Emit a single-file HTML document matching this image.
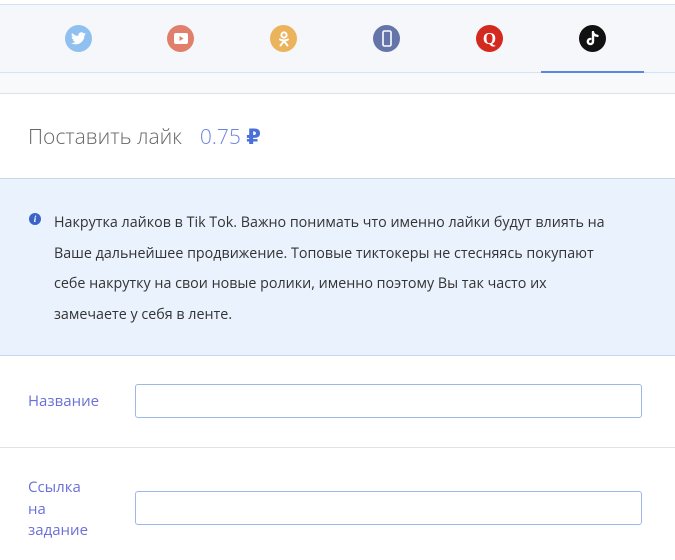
<!DOCTYPE html>
<html><head><meta charset="utf-8"><style>
*{margin:0;padding:0;box-sizing:border-box}
body{width:675px;height:560px;overflow:hidden;background:#fff;font-family:"Open Sans","Liberation Sans","DejaVu Sans",sans-serif;position:relative}
.nav{position:absolute;top:4px;left:0;width:675px;height:69px;background:#f5f7fa;border-top:1px solid #d3e2f4;border-bottom:1px solid #d3e2f4}
.strip{position:absolute;top:73px;left:0;width:675px;height:21px;background:#f8f9fb;border-bottom:1px solid #dcdfe4}
.ic{position:absolute;top:25px;width:27px;height:27px;border-radius:50%;display:flex;align-items:center;justify-content:center}
.ul{position:absolute;left:541px;top:71px;width:103px;height:2px;background:#5b87e0}
.title{position:absolute;left:28px;top:123px;font-size:21px;color:#666;font-weight:300;letter-spacing:0px}
.title span{color:#6c83de;margin-left:18px}
.info{position:absolute;top:178px;left:0;width:675px;height:178px;background:#eaf2fd;border-top:1px solid #c8d8ec;border-bottom:1px solid #c8d8ec}
.info p{position:absolute;left:54px;top:29px;white-space:nowrap;font-size:14.3px;line-height:30.5px;color:#333}
.ii{position:absolute;left:29px;top:34px;width:12px;height:12px;border-radius:50%;background:#3b62c9;color:#fff;font-size:9px;font-weight:bold;font-style:italic;text-align:center;line-height:12px;font-family:"Liberation Serif",serif}
.hr{position:absolute;left:0;top:447px;width:675px;height:1px;background:#e2e2e2}
.lbl{position:absolute;left:28px;font-size:15px;color:#6a70d8;line-height:21.5px}
.inp{position:absolute;left:135px;width:507px;height:34px;border:1px solid #9fb6e8;border-radius:3px;background:#fff}
</style></head><body>
<div class="nav"></div>
<div class="strip"></div>
<div class="ic" style="left:65px;background:#8fc0f0"><svg width="15" height="13" viewBox="0 0 24 20"><path fill="#fff" d="M24 2.4a10 10 0 0 1-2.8.8A5 5 0 0 0 23.3.5a10 10 0 0 1-3.1 1.2A4.9 4.9 0 0 0 11.8 6 14 14 0 0 1 1.7.9a4.9 4.9 0 0 0 1.5 6.6A4.900 4.900 0 0 1 1 6.9a4.9 4.9 0 0 0 3.9 4.8 4.900 4.900 0 0 1-2.2.1 4.9 4.9 0 0 0 4.6 3.4A9.900 9.900 0 0 1 0 17.2 14 14 0 0 0 7.5 19.4c9 0 14-7.500 14-14v-.6A10 10 0 0 0 24 2.4z"/></svg></div>
<div class="ic" style="left:167px;background:#e07f6c"><svg width="14" height="11" viewBox="0 0 14 11"><rect width="14" height="11" rx="2" fill="#fff"/><path d="M5.500 3v5l4-2.500z" fill="#e07f6c"/></svg></div>
<div class="ic" style="left:270px;background:#ebb35c"><svg width="12" height="16" viewBox="0 0 12 16" fill="none" stroke="#fff" stroke-width="2" stroke-linecap="round"><circle cx="6" cy="4" r="2.6"/><path d="M2 8.500q4 2 8 0M6 10l-3.500 4.500M6 10l3.500 4.500"/></svg></div>
<div class="ic" style="left:373px;background:#6575a9"><svg width="10" height="17" viewBox="0 0 10 17"><rect x="1" y="1" width="8" height="15" rx="1.500" fill="none" stroke="#fff" stroke-width="1.600"/></svg></div>
<div class="ic" style="left:476px;background:#d3291f;color:#fff;font:bold 17px 'Liberation Serif',serif">Q</div>
<div class="ic" style="left:579px;background:#111"><svg width="14" height="15" viewBox="0 0 14 15" fill="none" stroke="#fff" stroke-width="2.400" stroke-linecap="round"><path d="M7 1v9.500a2.600 2.600 0 1 1-2.600-2.600M7 1.500q1 3 4.500 3.300"/></svg></div>
<div class="ul"></div>
<div class="title">Поставить лайк<span>0.75 <b style="font-weight:bold;color:#4a6fd6">₽</b></span></div>
<div class="info"><div class="ii">i</div><p>Накрутка лайков в Tik Tok. Важно понимать что именно лайки будут влиять на<br>Ваше дальнейшее продвижение. Топовые тиктокеры не стесняясь покупают<br>себе накрутку на свои новые ролики, именно поэтому Вы так часто их<br>замечаете у себя в ленте.</p></div>
<div class="lbl" style="top:391px">Название</div>
<div class="inp" style="top:384px"></div>
<div class="hr"></div>
<div class="lbl" style="top:477px">Ссылка<br>на<br>задание</div>
<div class="inp" style="top:491px"></div>
</body></html>
